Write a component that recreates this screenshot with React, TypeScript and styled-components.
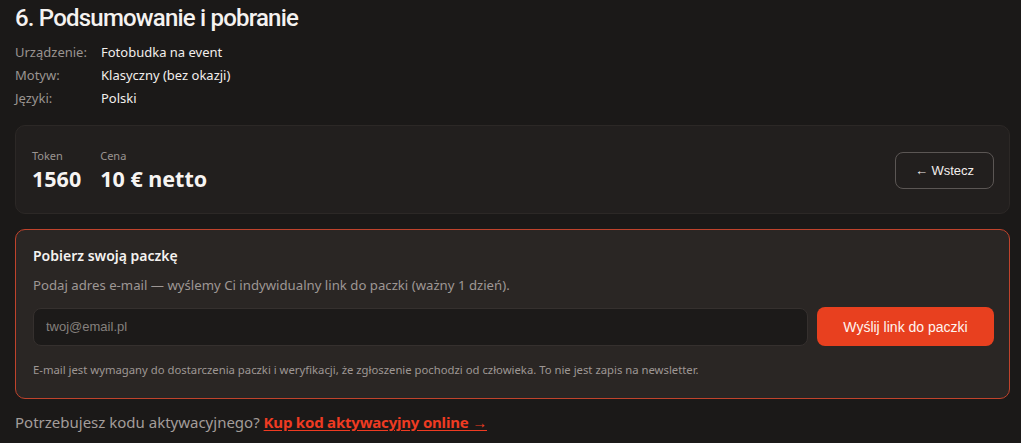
import React from "react";
import styled, { createGlobalStyle } from "styled-components";

const Global = createGlobalStyle`
  html, body { margin: 0; padding: 0; background: #1b1918; }
  body { font-family: "Segoe UI", "Noto Sans", "Open Sans", sans-serif; color: #f2eeec; }
  * { box-sizing: border-box; }
`;

const Page = styled.div`
  width: 995px;
  margin-left: 15px;
  padding-top: 2px;
  display: flex;
  flex-direction: column;
`;

const Title = styled.h2`
  margin: 0;
  font-family: Roboto, "Noto Sans", sans-serif;
  font-size: 24px;
  font-weight: 500;
  line-height: 32px;
  letter-spacing: -0.8px;
  color: #f5f2f0;
`;

const Meta = styled.dl`
  margin: 9px 0 0;
  display: grid;
  grid-template-columns: 86px 1fr;
  row-gap: 4px;
  font-size: 13px;
  line-height: 19px;
`;

const MetaLabel = styled.dt`
  color: #9a9491;
`;

const MetaValue = styled.dd`
  margin: 0;
  color: #f2eeec;
`;

const PriceCard = styled.div`
  margin-top: 17px;
  height: 89px;
  border: 1px solid #2c2826;
  border-radius: 10px;
  background: #221f1e;
  display: flex;
  align-items: center;
  justify-content: space-between;
  padding: 0 15px 0 16px;
`;

const Stats = styled.div`
  display: flex;
  gap: 19px;
  padding-top: 2px;
`;

const Stat = styled.div`
  display: flex;
  flex-direction: column;
`;

const StatLabel = styled.span`
  font-size: 11px;
  line-height: 14px;
  color: #9a9491;
`;

const StatValue = styled.span`
  margin-top: 2px;
  font-size: 21.5px;
  font-weight: 700;
  line-height: 28px;
  color: #f7f4f2;
`;

const GhostButton = styled.button`
  height: 37px;
  width: 99px;
  margin-top: 1px;
  border: 1px solid #5b5654;
  border-radius: 8px;
  background: transparent;
  color: #f2eeec;
  font-family: "Liberation Sans", Arial, sans-serif;
  font-size: 13px;
`;

const DownloadCard = styled.section`
  margin-top: 15px;
  border: 1px solid #c0432c;
  border-radius: 10px;
  background: #2a2624;
  padding: 16px 15px 20px 17px;
  display: flex;
  flex-direction: column;
`;

const CardTitle = styled.h3`
  margin: 0;
  font-size: 14px;
  font-weight: 600;
  line-height: 20px;
  color: #f5f2f0;
`;

const Desc = styled.p`
  margin: 10px 0 0;
  font-size: 13.2px;
  line-height: 18px;
  color: #9e9794;
`;

const FormRow = styled.div`
  margin-top: 13px;
  display: flex;
  gap: 9px;
  align-items: center;
`;

const EmailInput = styled.input`
  flex: 1;
  height: 38px;
  border: 1px solid #35302e;
  border-radius: 8px;
  background: #1c1a19;
  color: #f2eeec;
  padding: 0 12px;
  font-family: "Liberation Sans", Arial, sans-serif;
  font-size: 13px;
  outline: none;
  &::placeholder { color: #85807d; }
`;

const PrimaryButton = styled.button`
  width: 177px;
  height: 39px;
  border: none;
  border-radius: 8px;
  background: #e8401f;
  color: #fff4f0;
  font-family: "Liberation Sans", Arial, sans-serif;
  font-size: 14px;
`;

const Note = styled.p`
  margin: 16px 0 0;
  font-size: 11.3px;
  line-height: 16px;
  color: #9e9794;
`;

const Footer = styled.p`
  margin: 12px 0 0;
  font-size: 15px;
  line-height: 22px;
  color: #a39d9a;
`;

const FooterLink = styled.a`
  color: #ef3b22;
  font-weight: 700;
  letter-spacing: -0.2px;
  text-decoration: underline;
  text-underline-offset: 2px;
`;

export default function App() {
  return (
    <>
      <Global />
      <Page>
        <Title>6. Podsumowanie i pobranie</Title>
        <Meta>
          <MetaLabel>Urządzenie:</MetaLabel>
          <MetaValue>Fotobudka na event</MetaValue>
          <MetaLabel>Motyw:</MetaLabel>
          <MetaValue>Klasyczny (bez okazji)</MetaValue>
          <MetaLabel>Języki:</MetaLabel>
          <MetaValue>Polski</MetaValue>
        </Meta>
        <PriceCard>
          <Stats>
            <Stat>
              <StatLabel>Token</StatLabel>
              <StatValue>1560</StatValue>
            </Stat>
            <Stat>
              <StatLabel>Cena</StatLabel>
              <StatValue>10 € netto</StatValue>
            </Stat>
          </Stats>
          <GhostButton>← Wstecz</GhostButton>
        </PriceCard>
        <DownloadCard>
          <CardTitle>Pobierz swoją paczkę</CardTitle>
          <Desc>Podaj adres e-mail — wyślemy Ci indywidualny link do paczki (ważny 1 dzień).</Desc>
          <FormRow>
            <EmailInput type="email" placeholder="twoj@email.pl" />
            <PrimaryButton>Wyślij link do paczki</PrimaryButton>
          </FormRow>
          <Note>
            E-mail jest wymagany do dostarczenia paczki i weryfikacji, że zgłoszenie pochodzi od człowieka. To nie jest zapis na newsletter.
          </Note>
        </DownloadCard>
        <Footer>
          Potrzebujesz kodu aktywacyjnego?{" "}
          <FooterLink href="#">Kup kod aktywacyjny online →</FooterLink>
        </Footer>
      </Page>
    </>
  );
}
